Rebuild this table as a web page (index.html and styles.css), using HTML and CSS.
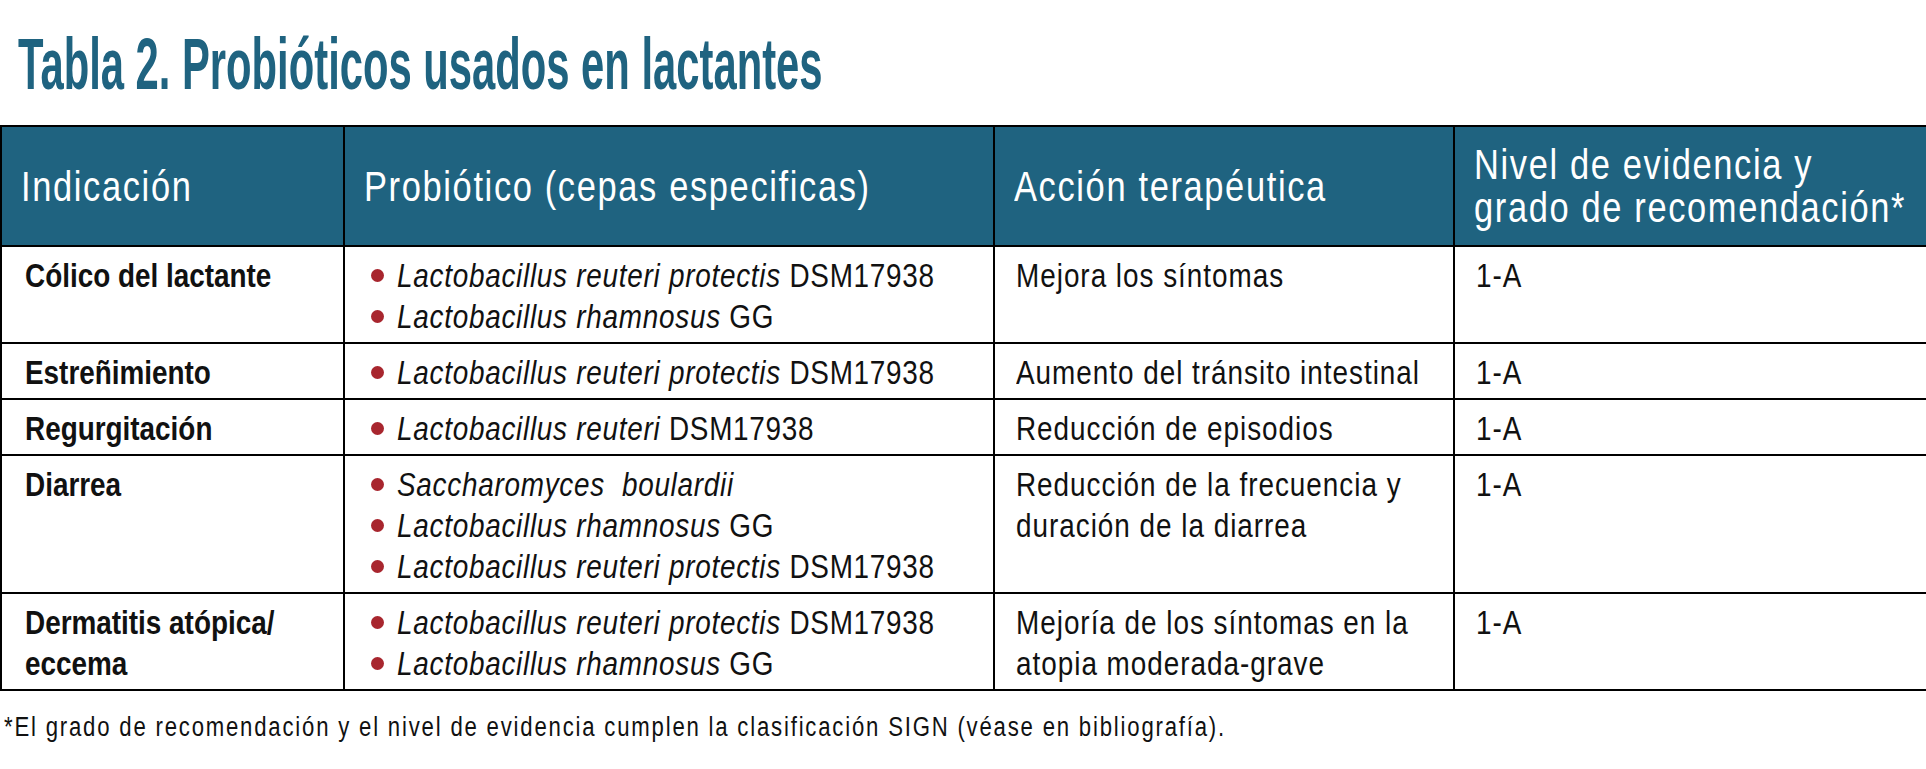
FILE: index.html
```
<!DOCTYPE html>
<html lang="es">
<head>
<meta charset="utf-8">
<title>Tabla 2. Probióticos usados en lactantes</title>
<link rel="stylesheet" href="styles.css">
</head>
<body>
<div class="page">
  <h1 class="title"><span class="title-text">Tabla 2. Probióticos usados en lactantes</span></h1>
  <table class="probio">
    <colgroup>
      <col class="c1"><col class="c2"><col class="c3"><col class="c4">
    </colgroup>
    <thead>
      <tr>
        <th><span class="ln">Indicación</span></th>
        <th><span class="ln">Probiótico (cepas especificas)</span></th>
        <th><span class="ln">Acción terapéutica</span></th>
        <th><span class="ln">Nivel de evidencia y</span><span class="ln">grado de recomendación*</span></th>
      </tr>
    </thead>
    <tbody>
      <tr>
        <td class="ind"><span class="ln">Cólico del lactante</span></td>
        <td class="strains"><ul>
          <li><span class="ln"><i>Lactobacillus reuteri protectis</i> DSM17938</span></li>
          <li><span class="ln"><i>Lactobacillus rhamnosus</i> GG</span></li>
        </ul></td>
        <td><span class="ln">Mejora los síntomas</span></td>
        <td class="lvl"><span class="ln">1-A</span></td>
      </tr>
      <tr>
        <td class="ind"><span class="ln">Estreñimiento</span></td>
        <td class="strains"><ul>
          <li><span class="ln"><i>Lactobacillus reuteri protectis</i> DSM17938</span></li>
        </ul></td>
        <td><span class="ln">Aumento del tránsito intestinal</span></td>
        <td class="lvl"><span class="ln">1-A</span></td>
      </tr>
      <tr>
        <td class="ind"><span class="ln">Regurgitación</span></td>
        <td class="strains"><ul>
          <li><span class="ln"><i>Lactobacillus reuteri</i> DSM17938</span></li>
        </ul></td>
        <td><span class="ln">Reducción de episodios</span></td>
        <td class="lvl"><span class="ln">1-A</span></td>
      </tr>
      <tr>
        <td class="ind"><span class="ln">Diarrea</span></td>
        <td class="strains"><ul>
          <li><span class="ln"><i>Saccharomyces&nbsp; boulardii</i></span></li>
          <li><span class="ln"><i>Lactobacillus rhamnosus</i> GG</span></li>
          <li><span class="ln"><i>Lactobacillus reuteri protectis</i> DSM17938</span></li>
        </ul></td>
        <td><span class="ln">Reducción de la frecuencia y</span><span class="ln">duración de la diarrea</span></td>
        <td class="lvl"><span class="ln">1-A</span></td>
      </tr>
      <tr>
        <td class="ind"><span class="ln">Dermatitis atópica/</span><span class="ln">eccema</span></td>
        <td class="strains"><ul>
          <li><span class="ln"><i>Lactobacillus reuteri protectis</i> DSM17938</span></li>
          <li><span class="ln"><i>Lactobacillus rhamnosus</i> GG</span></li>
        </ul></td>
        <td><span class="ln">Mejoría de los síntomas en la</span><span class="ln">atopia moderada-grave</span></td>
        <td class="lvl"><span class="ln">1-A</span></td>
      </tr>
    </tbody>
  </table>
  <p class="note"><span class="ln">*El grado de recomendación y el nivel de evidencia cumplen la clasificación SIGN (véase en bibliografía).</span></p>
</div>
</body>
</html>
```
FILE: styles.css
```
html, body {
  margin: 0;
  padding: 0;
  background: #ffffff;
}

.page {
  width: 1926px;
  font-family: "Liberation Sans", Arial, sans-serif;
  color: #111111;
}

/* condensed rendering of each text line */
.ln {
  display: block;
  white-space: nowrap;
  transform: scaleX(0.82);
  transform-origin: 0 50%;
}

.title {
  margin: 0 0 25px 0;
  padding: 28px 0 0 18px;
  height: 72px;
  font-size: 72px;
  line-height: 72px;
  font-weight: bold;
  color: #1f6380;
  white-space: nowrap;
}

.title-text {
  display: inline-block;
  transform: scaleX(0.58);
  transform-origin: 0 50%;
}

.probio {
  width: 1926px;
  table-layout: fixed;
  border-collapse: collapse;
  border: 2px solid #000000;
}

.c1 { width: 343px; }
.c2 { width: 650px; }
.c3 { width: 460px; }
.c4 { width: 473px; }

.probio th,
.probio td {
  border: 2px solid #000000;
}

.probio th {
  background: #1f6380;
  color: #ffffff;
  height: 118px;
  padding: 0 0 0 19px;
  text-align: left;
  vertical-align: middle;
  font-weight: normal;
  font-size: 42px;
  line-height: 43px;
  letter-spacing: 2px;
}

.probio td {
  vertical-align: top;
  padding: 8px 10px 5px 21px;
  font-size: 34px;
  line-height: 41px;
  letter-spacing: 1.2px;
}

.probio td.ind {
  padding-left: 23px;
  font-weight: bold;
  letter-spacing: 0;
}

.probio td.strains {
  padding-left: 26px;
}

.strains ul {
  margin: 0;
  padding: 0;
  list-style: none;
}

.strains li {
  display: flex;
  align-items: center;
}

.strains li::before {
  content: "";
  flex: none;
  width: 13px;
  height: 13px;
  border-radius: 50%;
  background: #a8262e;
  margin-right: 13px;
}

.strains .ln {
  flex: 1 1 auto;
  letter-spacing: 0.9px;
}

.strains i {
  font-style: italic;
}

.note {
  margin: 20px 0 0 4px;
  font-size: 27px;
  line-height: 32px;
  letter-spacing: 2.2px;
  color: #111111;
}
```
